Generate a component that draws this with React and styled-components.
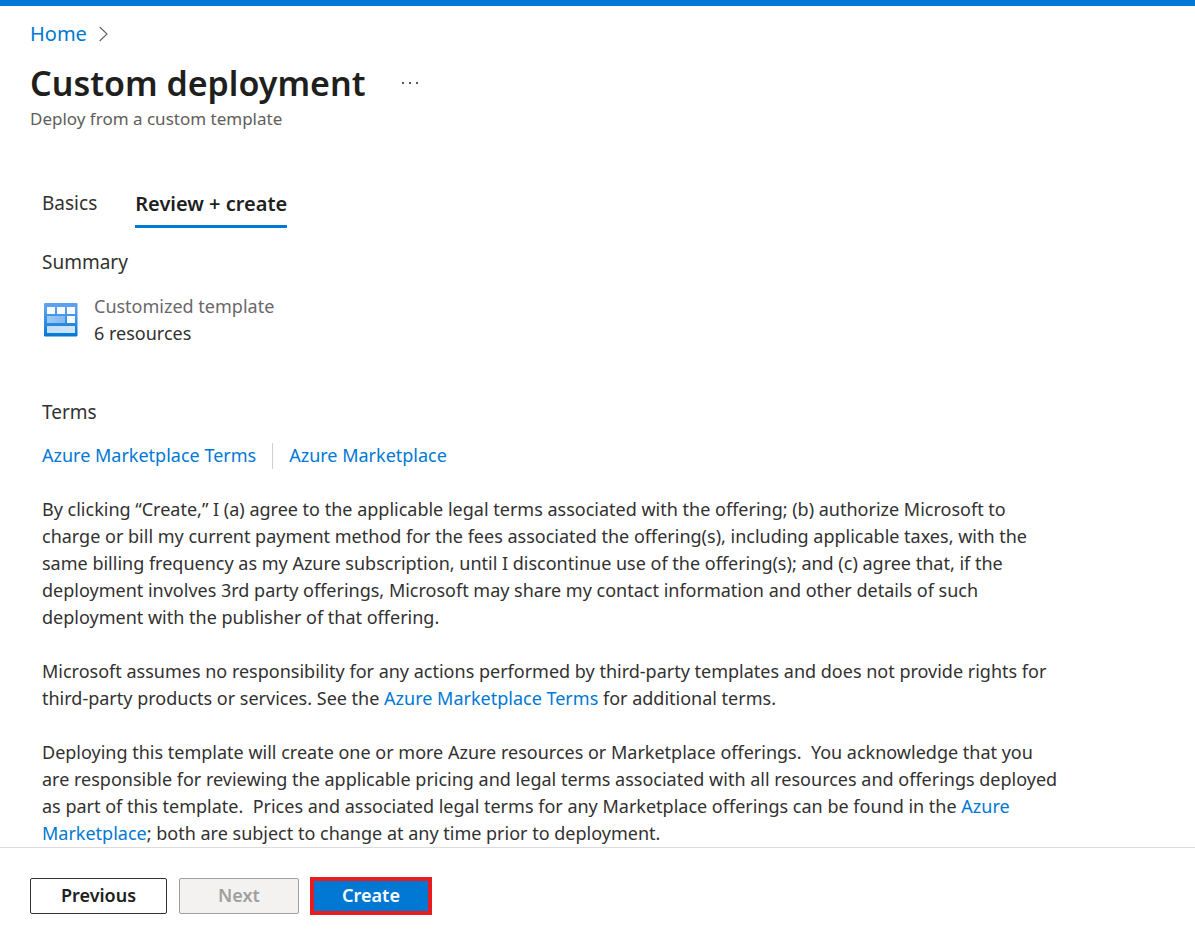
import React from "react";
import styled, { createGlobalStyle } from "styled-components";

const GlobalStyle = createGlobalStyle`
  *, *::before, *::after { box-sizing: border-box; }
  body {
    margin: 0;
    background: #fff;
    color: #323130;
    font-family: "Segoe UI", "Noto Sans", "Open Sans", sans-serif;
    font-size: 18px;
    line-height: 27px;
  }
`;

const Page = styled.div`
  display: flex;
  flex-direction: column;
  min-height: 100vh;
  border-top: 6px solid #0078d7;
`;

const Header = styled.header`
  padding: 14px 30px 0;
`;

const Breadcrumb = styled.nav`
  display: flex;
  align-items: center;
  gap: 12px;
  font-size: 20px;
`;

const Link = styled.a`
  color: #0078d4;
  text-decoration: none;
  &:hover { text-decoration: underline; }
`;

const TitleRow = styled.div`
  display: flex;
  align-items: center;
  gap: 32px;
  margin-top: 13px;
`;

const Title = styled.h1`
  margin: 0;
  color: #201f1e;
  font-size: 34px;
  font-weight: 600;
  line-height: 46px;
`;

const MoreButton = styled.button`
  display: flex;
  padding: 4px;
  border: 0;
  background: none;
  color: #323130;
`;

const Subtitle = styled.p`
  margin: 0;
  color: #605e5c;
  font-size: 17px;
  line-height: 26px;
`;

const Main = styled.main`
  flex: 1;
  padding: 58px 42px 0;
`;

const Tabs = styled.div`
  display: flex;
  gap: 38px;
`;

const Tab = styled.button`
  padding: 0 0 8px;
  border: 0;
  border-bottom: 3px solid ${(p) => (p.$active ? "#0078d4" : "transparent")};
  background: none;
  color: ${(p) => (p.$active ? "#201f1e" : "#323130")};
  font: inherit;
  font-size: ${(p) => (p.$active ? 20 : 19)}px;
  font-weight: ${(p) => (p.$active ? 600 : 400)};
`;

const SectionTitle = styled.h2`
  margin: 0;
  font-size: 19px;
  font-weight: 400;
  line-height: 28px;
`;

const Section = styled.section`
  margin-top: ${(p) => p.$gap}px;
`;

const TemplateRow = styled.div`
  display: flex;
  align-items: center;
  gap: 16px;
  margin-top: 17px;
  padding-left: 2px;
`;

const TemplateName = styled.div`
  color: #69676a;
`;

const LinkRow = styled.div`
  display: flex;
  align-items: center;
  margin-top: 16px;
`;

const Divider = styled.span`
  width: 1px;
  height: 26px;
  margin: 0 16px;
  background: #d2d0ce;
`;

const Legal = styled.div`
  max-width: 1020px;
  margin-top: 27px;
`;

const Paragraph = styled.p`
  margin: 0;
  & + & { margin-top: 27px; }
`;

const Footer = styled.footer`
  display: flex;
  align-items: center;
  padding: 29px 30px 18px;
  border-top: 1px solid #dcdcdc;
`;

const Button = styled.button`
  min-width: ${(p) => p.$width}px;
  height: 36px;
  margin-right: 12px;
  padding: 0 16px 2px;
  border: 1px solid #323130;
  border-radius: 2px;
  background: #fff;
  color: #201f1e;
  font: inherit;
  font-weight: 600;
  &:disabled {
    border-color: #a19f9d;
    background: #f3f2f1;
    color: #a19f9d;
  }
`;

const PrimaryButton = styled(Button)`
  height: 38px;
  margin: 0 0 0 -1px;
  border: 4px solid #e81b1f;
  border-radius: 0;
  background: #0078d4;
  color: #fff;
`;

const Chevron = () => (
  <svg width="9" height="16" viewBox="0 0 9 16" fill="none" stroke="#605e5c" strokeWidth="1.1" aria-hidden="true">
    <path d="M.7 1 8 8 .7 15" />
  </svg>
);

const Dots = () => (
  <svg width="18" height="4" viewBox="0 0 18 4" fill="currentColor" aria-hidden="true">
    <circle cx="2" cy="2" r="1.1" />
    <circle cx="9" cy="2" r="1.1" />
    <circle cx="16" cy="2" r="1.1" />
  </svg>
);

const TemplateIcon = () => (
  <svg width="34" height="34" viewBox="0 0 34 34" aria-hidden="true">
    <defs>
      <linearGradient id="frame" x1="0" y1="0" x2="0" y2="1">
        <stop offset="0.15" stopColor="#5ea0ef" />
        <stop offset="1" stopColor="#0078d4" />
      </linearGradient>
      <linearGradient id="mid" x1="0" y1="0" x2="1" y2="0">
        <stop offset="0" stopColor="#9dc8f5" />
        <stop offset="1" stopColor="#83b9f1" />
      </linearGradient>
      <linearGradient id="low" x1="0" y1="0" x2="1" y2="0">
        <stop offset="0" stopColor="#c2def6" />
        <stop offset="1" stopColor="#d0e6f8" />
      </linearGradient>
    </defs>
    <rect width="33.5" height="33.5" rx="1.2" fill="url(#frame)" />
    <g fill="#f7fbff">
      <rect x="3" y="4" width="8" height="7" />
      <rect x="13" y="4" width="8" height="7" />
      <rect x="23" y="4" width="8" height="7" />
      <rect x="23" y="13" width="8" height="7" />
    </g>
    <rect x="3" y="13" width="18" height="7" fill="url(#mid)" />
    <rect x="3" y="23" width="28" height="7" fill="url(#low)" />
  </svg>
);

export default function App() {
  return (
    <>
      <GlobalStyle />
      <Page>
        <Header>
          <Breadcrumb aria-label="Breadcrumb">
            <Link href="#home">Home</Link>
            <Chevron />
          </Breadcrumb>
          <TitleRow>
            <Title>Custom deployment</Title>
            <MoreButton type="button" aria-label="More actions">
              <Dots />
            </MoreButton>
          </TitleRow>
          <Subtitle>Deploy from a custom template</Subtitle>
        </Header>
        <Main>
          <Tabs role="tablist">
            <Tab type="button" role="tab" aria-selected="false">Basics</Tab>
            <Tab type="button" role="tab" aria-selected="true" $active>Review + create</Tab>
          </Tabs>
          <Section $gap={20}>
            <SectionTitle>Summary</SectionTitle>
            <TemplateRow>
              <TemplateIcon />
              <div>
                <TemplateName>Customized template</TemplateName>
                <div>6 resources</div>
              </div>
            </TemplateRow>
          </Section>
          <Section $gap={51}>
            <SectionTitle>Terms</SectionTitle>
            <LinkRow>
              <Link href="#marketplace-terms">Azure Marketplace Terms</Link>
              <Divider />
              <Link href="#marketplace">Azure Marketplace</Link>
            </LinkRow>
            <Legal>
              <Paragraph>
                By clicking “Create,” I (a) agree to the applicable legal terms associated with the offering; (b)
                authorize Microsoft to charge or bill my current payment method for the fees associated the
                offering(s), including applicable taxes, with the same billing frequency as my Azure subscription,
                until I discontinue use of the offering(s); and (c) agree that, if the deployment involves 3rd party
                offerings, Microsoft may share my contact information and other details of such deployment with the
                publisher of that offering.
              </Paragraph>
              <Paragraph>
                Microsoft assumes no responsibility for any actions performed by third-party templates and does not
                provide rights for third-party products or services. See the{" "}
                <Link href="#marketplace-terms">Azure Marketplace Terms</Link> for additional terms.
              </Paragraph>
              <Paragraph>
                Deploying this template will create one or more Azure resources or Marketplace offerings.&nbsp; You
                acknowledge that you are responsible for reviewing the applicable pricing and legal terms associated
                with all resources and offerings deployed as part of this template.&nbsp; Prices and associated legal
                terms for any Marketplace offerings can be found in the{" "}
                <Link href="#marketplace">Azure Marketplace</Link>; both are subject to change at any time prior to
                deployment.
              </Paragraph>
            </Legal>
          </Section>
        </Main>
        <Footer>
          <Button type="button" $width={137}>Previous</Button>
          <Button type="button" $width={120} disabled>Next</Button>
          <PrimaryButton type="button" $width={122}>Create</PrimaryButton>
        </Footer>
      </Page>
    </>
  );
}
